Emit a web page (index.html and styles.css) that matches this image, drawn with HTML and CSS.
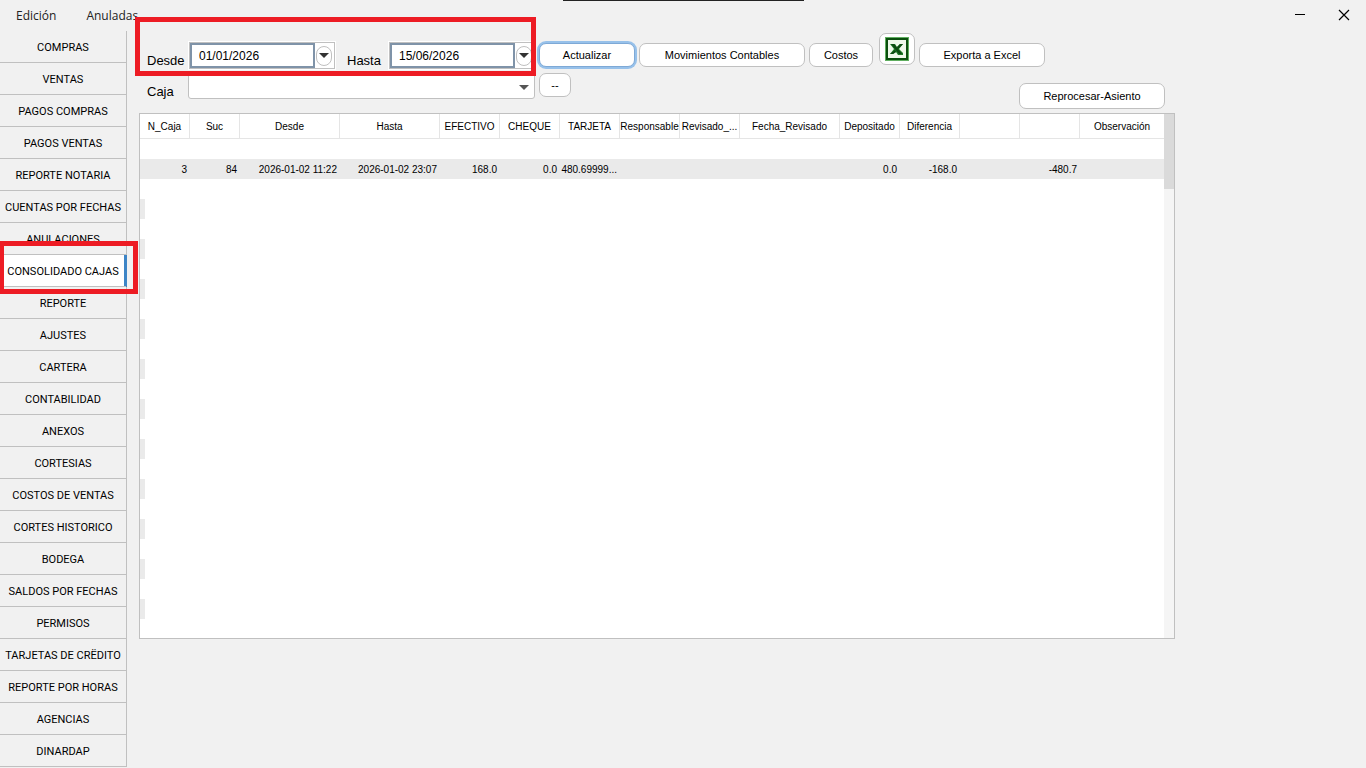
FILE: index.html
```html
<!doctype html>
<html lang="es">
<head>
<meta charset="utf-8">
<title>Consolidado Cajas</title>
<link rel="stylesheet" href="styles.css">
</head>

<body>
	<header class="top">
		<nav class="menu">
			<button type="button">Edición</button>
			<button type="button">Anuladas</button>
		</nav>
		<span class="grip"></span>
		<div class="win">
			<button type="button" aria-label="Minimizar"><svg width="12" height="12" viewBox="0 0 12 12"><path d="M1 5.5h10" stroke="#000"/></svg></button>
			<button type="button" aria-label="Cerrar"><svg width="12" height="12" viewBox="0 0 12 12"><path d="M1 1l10 10M11 1L1 11" stroke="#000" stroke-width="1.2"/></svg></button>
		</div>
	</header>

	<div class="wrap">
		<nav class="side">
			<a href="#">COMPRAS</a>
			<a href="#">VENTAS</a>
			<a href="#">PAGOS COMPRAS</a>
			<a href="#">PAGOS VENTAS</a>
			<a href="#">REPORTE NOTARIA</a>
			<a href="#">CUENTAS POR FECHAS</a>
			<a href="#">ANULACIONES</a>
			<a href="#" class="active">CONSOLIDADO CAJAS<span class="mark mark-side"></span></a>
			<a href="#">REPORTE</a>
			<a href="#">AJUSTES</a>
			<a href="#">CARTERA</a>
			<a href="#">CONTABILIDAD</a>
			<a href="#">ANEXOS</a>
			<a href="#">CORTESIAS</a>
			<a href="#">COSTOS DE VENTAS</a>
			<a href="#">CORTES HISTORICO</a>
			<a href="#">BODEGA</a>
			<a href="#">SALDOS POR FECHAS</a>
			<a href="#">PERMISOS</a>
			<a href="#">TARJETAS DE CRËDITO</a>
			<a href="#">REPORTE POR HORAS</a>
			<a href="#">AGENCIAS</a>
			<a href="#">DINARDAP</a>
		</nav>

		<main class="main">
			<div class="bar">
				<div class="dates">
					<label for="desde">Desde</label>
					<div class="date">
						<input type="text" id="desde" value="01/01/2026">
						<button type="button" aria-label="Elegir desde"><svg width="10" height="5" viewBox="0 0 10 5"><path d="M0 0h10L5 5z" fill="#333"/></svg></button>
					</div>
					<label for="hasta">Hasta</label>
					<div class="date">
						<input type="text" id="hasta" value="15/06/2026">
						<button type="button" aria-label="Elegir hasta"><svg width="10" height="5" viewBox="0 0 10 5"><path d="M0 0h10L5 5z" fill="#333"/></svg></button>
					</div>
					<span class="mark mark-dates"></span>
				</div>
				<div class="tools">
					<button type="button" class="btn focus">Actualizar</button>
					<button type="button" class="btn wide">Movimientos Contables</button>
					<button type="button" class="btn">Costos</button>
					<button type="button" class="btn icon" aria-label="Excel">
						<svg width="24" height="24" viewBox="0 0 24 24">
							<path d="M0 0h24v24H0z" fill="#5fae5f"/>
							<path d="M1 1h22v22H1z" fill="#0b4f0e"/>
							<path d="M3 3h18v18H3z" fill="#eef8ea"/>
							<path d="M5 7h5l2 3 3-3h3l-4 5 4 4v2h-5l-2-3-3 2H5l4-5z" fill="#1d7a25"/>
							<path d="M6 7h3l8 10h-3zM15 7h3l-5 5-1-2z" fill="#0d4a12"/>
							<path d="M10 13l-5 4h3l3-2z" fill="#0d4a12"/>
						</svg>
					</button>
					<button type="button" class="btn mid">Exporta a Excel</button>
				</div>
			</div>

			<div class="bar">
				<label for="caja">Caja</label>
				<div class="combo">
					<select id="caja"><option></option></select>
					<svg width="10" height="5" viewBox="0 0 10 5"><path d="M0 0h10L5 5z" fill="#555"/></svg>
				</div>
				<button type="button" class="btn mini">--</button>
				<button type="button" class="btn reproc">Reprocesar-Asiento</button>
			</div>

			<div class="panel">
				<table class="grid">
					<colgroup>
						<col class="c50"><col class="c50"><col class="c100"><col class="c100">
						<col class="c60"><col class="c60"><col class="c60"><col class="c60"><col class="c60">
						<col class="c100">
						<col class="c60"><col class="c60"><col class="c60"><col class="c60">
						<col>
					</colgroup>
					<thead>
						<tr>
							<th>N_Caja</th><th>Suc</th><th>Desde</th><th>Hasta</th>
							<th>EFECTIVO</th><th>CHEQUE</th><th>TARJETA</th>
							<th>Responsable</th><th>Revisado_...</th><th>Fecha_Revisado</th>
							<th>Depositado</th><th>Diferencia</th><th></th><th></th><th>Observación</th>
						</tr>
					</thead>
					<tbody>
						<tr><td colspan="15"></td></tr>
						<tr class="alt">
							<td>3</td><td>84</td><td>2026-01-02 11:22</td><td>2026-01-02 23:07</td>
							<td>168.0</td><td>0.0</td><td>480.69999...</td>
							<td></td><td></td><td></td>
							<td>0.0</td><td>-168.0</td><td></td><td>-480.7</td><td></td>
						</tr>
					</tbody>
				</table>
				<div class="scroll"><span class="thumb"></span></div>
			</div>
		</main>
	</div>
</body>
</html>
```

FILE: styles.css
```css
* { margin:0; padding:0; box-sizing:border-box; }
body { background:#f1f1f1; color:#000; font:11px "Liberation Sans", Arial, sans-serif; }
button, input, select { font:inherit; color:inherit; }
a { color:inherit; text-decoration:none; }
svg { display:block; }

/* top */
.top { position:relative; display:flex; justify-content:space-between; height:31px; }
.menu { display:flex; gap:30px; height:30px; padding-left:16px; }
.menu button { border:0; background:none; font:12px "Open Sans", sans-serif; color:#222; }
.grip { position:absolute; top:0; left:563px; width:241px; height:1px; background:#222; }
.win { display:flex; height:30px; }
.win button { display:flex; align-items:center; justify-content:center; width:44px; border:0; background:none; }

.wrap { display:flex; align-items:flex-start; }

/* side */
.side { flex:none; width:127px; border-right:1px solid #c0c0c0; font-family:Roboto, sans-serif; }
.side a { position:relative; display:block; height:32px; line-height:34px; border-bottom:1px solid #c0c0c0; text-align:center; white-space:nowrap; }
.side .active { background:#fff; box-shadow:inset -2px 0 #3d85c6, 1px 0 #3d85c6; }

/* red marks */
.mark { position:absolute; border:5px solid #ed1c24; pointer-events:none; z-index:2; }
.mark-side { top:-14px; left:-1px; width:139px; height:53px; }
.mark-dates { top:-16px; left:-4px; right:0; height:59px; }

/* main */
.main { flex:1; max-width:1048px; padding:2px 0 0 12px; }
.bar { display:flex; align-items:flex-start; height:40px; }
.bar label { width:49px; padding-left:8px; line-height:38px; font-size:13px; }
.dates { position:relative; display:flex; }
.dates label { padding-top:9px; }
.dates .date + label { width:52px; padding-left:11px; }
.date { display:flex; align-items:center; width:148px; height:29px; margin-top:8px; padding:2px; background:#fff; outline:1px solid #c0c0c0; outline-offset:-2px; }
.date input { width:125px; height:25px; padding-left:7px; border:2px solid #7f93a8; background:#fff; font-size:12px; }
.date button { display:flex; align-items:center; justify-content:center; width:16px; height:20px; margin-left:1px; border:1px solid #c0c0c0; border-radius:8px; background:#fff; }

.tools { display:flex; gap:4px; padding-left:3px; }
.btn { flex:none; width:64px; height:24px; border:1px solid #c0c0c0; border-radius:7px; background:#fff; }
.tools .btn { margin-top:10px; }
.tools .focus { width:96px; border-color:#7ea9d6; box-shadow:0 0 0 2px #97c1ea; }
.tools .wide { width:166px; }
.tools .mid { width:126px; }
.tools .icon { display:flex; align-items:center; justify-content:center; width:36px; height:32px; margin:0 0 0 2px; }

.combo { position:relative; width:347px; height:26px; }
.combo select { appearance:none; width:100%; height:100%; border:1px solid #c0c0c0; border-radius:3px; background:#fff; }
.combo svg { position:absolute; top:12px; right:6px; pointer-events:none; }
.mini { width:32px; margin-left:4px; }
.reproc { width:146px; height:26px; margin:10px 10px 0 auto; }

/* table */
.panel { display:flex; align-items:stretch; min-height:526px; border:1px solid #c0c0c0; background:#fff repeating-linear-gradient(#fff 0 20px, #eaeaea 20px 40px) 0 25px / 5px 480px no-repeat; }
.grid { flex:1; align-self:flex-start; table-layout:fixed; width:0; border-collapse:separate; border-spacing:0; font-size:10px; }
.c50 { width:50px; }
.c60 { width:60px; }
.c100 { width:100px; }
.grid th { height:25px; border-right:1px solid #e5e5e5; border-bottom:1px solid #e5e5e5; background:#fff; font-weight:normal; white-space:nowrap; }
.grid th:last-child { border-right:0; }
.grid td { height:20px; padding-right:3px; background:#fff; text-align:right; white-space:nowrap; }
.grid .alt td { background:#eaeaea; }
.scroll { width:10px; background:#f5f5f5; }
.thumb { display:block; height:75px; background:#dadada; }
```
